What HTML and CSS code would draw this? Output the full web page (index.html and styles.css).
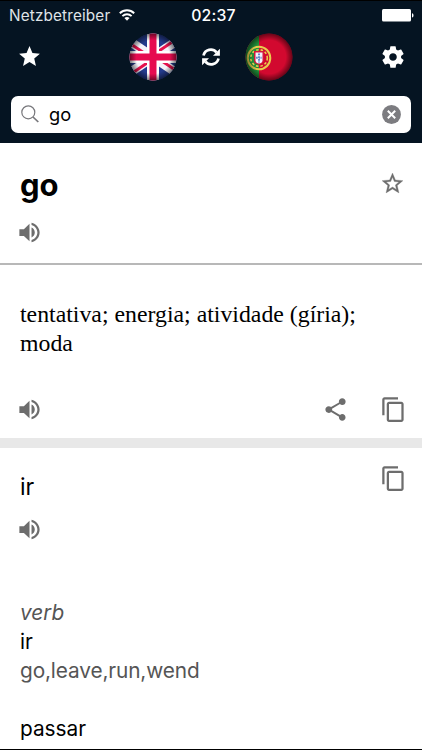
FILE: index.html
```html
<!DOCTYPE html>
<html lang="pt">
<head>
<meta charset="utf-8">
<title>Dictionary</title>
<link rel="stylesheet" href="styles.css">
</head>
<body>
<svg class="defs" aria-hidden="true">
  <symbol id="speaker" viewBox="0 0 24 24"><path d="M3 9v6h4l5 4.700V4.300L7 9H3zm13.700 3c0-1.770-1.020-3.600-2.900-4.400v8.800c1.880-.8 2.900-2.630 2.900-4.400zM13.800 3.230v2.060c2.890.86 5.200 3.540 5.200 6.710s-2.310 5.850-5.200 6.710v2.060c4.010-.91 7.200-4.490 7.200-8.770s-3.190-7.860-7.200-8.770z"/></symbol>
  <symbol id="copy" viewBox="0 0 24 24"><path d="M16 1H4c-1.1 0-2 .9-2 2v14h2V3h12V1zm3 4H8c-1.1 0-2 .9-2 2v14c0 1.1.9 2 2 2h11c1.1 0 2-.9 2-2V7c0-1.100-.9-2-2-2zm0 16H8V7h11v14z"/></symbol>
</svg>
<header class="header">
  <div class="status">
    <div class="carrier"><span class="carrier-name">Netzbetreiber</span>
      <svg class="wifi" viewBox="0 0 16 12"><g fill="none" stroke="#fff" stroke-width="1.9"><path d="M.8 4.200a10.300 10.300 0 0 1 14.400 0"/><path d="M3.400 7.100a6.600 6.600 0 0 1 9.200 0"/></g><path fill="#fff" d="M5.400 9.100a3.800 3.800 0 0 1 5.200 0L8 11.700z"/></svg>
    </div>
    <span class="time">02:37</span>
    <svg class="battery" viewBox="0 0 32 13"><rect width="29" height="12.500" rx="1.500"/><path d="M30 4.200c2 .3 2 4 0 4.300z"/></svg>
  </div>
  <nav class="nav">
    <svg class="star" viewBox="0 0 24 24"><path d="M12 17.270 18.180 21l-1.640-7.030L22 9.240l-7.190-.61L12 2 9.190 8.630 2 9.240l5.460 4.730L5.820 21z"/></svg>
    <div class="languages">
      <svg class="flag" viewBox="0 0 48 48">
        <defs><clipPath id="round"><circle cx="24" cy="24" r="23.500"/></clipPath>
        <radialGradient id="shade"><stop offset=".7" stop-color="#000" stop-opacity="0"/><stop offset="1" stop-color="#000" stop-opacity=".55"/></radialGradient></defs>
        <g clip-path="url(#round)"><path fill="#243b8c" d="M0 0h48v48H0z"/>
        <path stroke="#f4f2fa" stroke-width="9" d="M-4 5 52 43M52 5-4 43"/>
        <path stroke="#e5124d" stroke-width="3" d="M-4 7 24 26M24 22 52 3M52 41 24 22M24 26-4 45"/>
        <path fill="#fff" d="M18 0h12v48H18zM0 18h48v12H0z"/>
        <path fill="#e60b50" d="M20.500 0h7v48h-7zM0 20.500h48v7H0z"/>
        <path fill="url(#shade)" d="M0 0h48v48H0z"/></g>
      </svg>
      <svg class="swap" viewBox="0 0 18 18"><g fill="none" stroke="#fff" stroke-width="2.700"><path d="M1.500 7.500A7.400 7.400 0 0 1 14.500 4.400"/><path d="M16.500 10.500A7.400 7.400 0 0 1 3.500 13.600"/></g><path fill="#fff" d="M17.900.8v6.900H11zM.1 17.200v-6.900H7z"/></svg>
      <svg class="flag" viewBox="0 0 48 48">
        <g clip-path="url(#round)"><path fill="#d2092f" d="M0 0h48v48H0z"/><path fill="#21913a" d="M0 0h14v48H0z"/>
        <circle cx="14" cy="25" r="11.300" fill="none" stroke="#e7cd4d" stroke-width="2"/>
        <circle cx="14" cy="25" r="8.300" fill="none" stroke="#e7cd4d" stroke-width="1.600" stroke-dasharray="2.500 2"/>
        <path fill="#d5163b" d="M9 18h10v9c0 6-10 6-10 0z"/><path fill="#f2f3fb" d="M10.500 19.500h7v8c0 4-7 4-7 0z"/>
        <path stroke="#6688c6" stroke-width="2" stroke-dasharray="1.800 .9" d="M14 20.500v9M11 24.700h6"/>
        <path fill="url(#shade)" d="M0 0h48v48H0z"/></g>
      </svg>
    </div>
    <svg class="gear" viewBox="0 0 24 24"><path d="M19.430 12.980c.04-.32.07-.64.07-.98s-.03-.66-.07-.98l2.110-1.650c.19-.15.24-.42.12-.64l-2-3.460c-.12-.22-.39-.3-.61-.22l-2.490 1c-.52-.4-1.080-.73-1.690-.98l-.38-2.650C14.460 2.180 14.250 2 14 2h-4c-.25 0-.46.18-.49.42l-.38 2.650c-.61.25-1.170.59-1.690.98l-2.490-1c-.23-.09-.49 0-.61.22l-2 3.460c-.13.22-.07.49.12.64l2.110 1.650c-.04.32-.07.65-.07.98s.03.66.07.98l-2.110 1.650c-.19.15-.24.42-.12.64l2 3.460c.12.22.39.3.61.22l2.490-1c.52.4 1.080.73 1.690.98l.38 2.650c.03.24.24.42.49.42h4c.25 0 .46-.18.49-.42l.38-2.650c.61-.25 1.170-.59 1.690-.98l2.490 1c.23.09.49 0 .61-.22l2-3.460c.12-.22.07-.49-.12-.64l-2.110-1.650zM12 15.500c-1.930 0-3.500-1.570-3.500-3.500s1.570-3.500 3.500-3.500 3.500 1.570 3.500 3.500-1.570 3.500-3.500 3.500z"/></svg>
  </nav>
  <div class="search">
    <svg class="lens" viewBox="0 0 18 18" fill="none" stroke="#77777b"><circle cx="7.300" cy="7.300" r="6.500" stroke-width="1.200"/><path stroke-width="1.700" d="m12 12 5.300 5"/></svg>
    <span class="query">go</span>
    <svg class="clear" viewBox="0 0 19 19"><circle cx="9.500" cy="9.500" r="9.400" fill="#7c7c80"/><path stroke="#fff" stroke-width="2" d="m5.800 5.800 7.400 7.400m0-7.400-7.400 7.400"/></svg>
  </div>
</header>
<main>
  <section class="word">
    <div class="row"><h1 class="headword">go</h1><svg class="outline-star" viewBox="0 0 24 24"><path d="m22 9.240-7.190-.62L12 2 9.190 8.630 2 9.240l5.460 4.730L5.820 21 12 17.270 18.180 21l-1.630-7.030L22 9.240zM12 15.400l-3.760 2.270 1-4.280-3.320-2.880 4.380-.38L12 6.100l1.710 4.040 4.380.38-3.320 2.880 1 4.280L12 15.400z"/></svg></div>
    <svg class="icon"><use href="#speaker"/></svg>
  </section>
  <section class="translation">
    <p class="meaning">tentativa; energia; atividade (gíria); moda</p>
    <div class="actions"><svg class="icon"><use href="#speaker"/></svg>
      <svg class="icon share" viewBox="0 0 24 24"><path d="M18 16.080c-.76 0-1.440.3-1.960.77L8.910 12.700c.05-.23.09-.46.09-.7s-.04-.47-.09-.7l7.050-4.110c.54.5 1.250.81 2.040.81 1.660 0 3-1.340 3-3s-1.340-3-3-3-3 1.340-3 3c0 .24.04.47.09.7L8.040 9.810C7.500 9.310 6.790 9 6 9c-1.660 0-3 1.340-3 3s1.340 3 3 3c.79 0 1.500-.31 2.040-.81l7.120 4.160c-.05.21-.08.43-.08.65 0 1.610 1.310 2.920 2.920 2.920s2.920-1.310 2.920-2.920-1.310-2.920-2.920-2.920z"/></svg>
      <svg class="icon"><use href="#copy"/></svg></div>
  </section>
  <section class="details">
    <div class="row"><h2 class="term">ir</h2><svg class="icon"><use href="#copy"/></svg></div>
    <svg class="icon detail-speaker"><use href="#speaker"/></svg>
    <dl class="entries">
      <dt class="kind">verb</dt>
      <dt class="entry">ir</dt>
      <dd class="synonyms">go,leave,run,wend</dd>
      <dt class="entry next">passar</dt>
    </dl>
  </section>
</main>
</body>
</html>
```
FILE: styles.css
```css
* { box-sizing: border-box; }
body { margin: 0; width: 422px; height: 750px; overflow: hidden; border-bottom: 1px solid #000; background: #fff; color: #000; font-family: Inter, "Liberation Sans", sans-serif; }
main { height: 606px; overflow: hidden; }
h1, h2, p, dl, dd { margin: 0; font-weight: 400; }
svg { display: block; flex: none; }
.defs { display: none; }
.header { height: 143px; background: #051422; color: #fff; border-top: 1px solid #000; }
.status { height: 28px; padding: 0 8px 0 9px; display: grid; grid-template-columns: 1fr auto 1fr; align-items: center; }
.carrier { display: flex; align-items: center; gap: 9px; }
.carrier-name { font-size: 15.3px; letter-spacing: 0.15px; color: #dfe3e7; }
.wifi { width: 16px; height: 12px; }
.time { margin-left: 4px; font-size: 15.8px; font-weight: 500; letter-spacing: 0.2px; }
.battery { width: 32px; height: 13px; fill: #fff; justify-self: end; }
.nav { height: 55px; padding: 0 16px 0 17px; display: flex; justify-content: space-between; align-items: center; }
.star { width: 25px; height: 25px; fill: #fff; }
.languages { display: flex; align-items: center; gap: 25px; }
.flag { width: 48px; height: 48px; }
.swap { width: 18px; height: 18px; }
.gear { width: 26px; height: 26px; fill: #fff; }
.search { margin: 12px 11px 0; height: 37px; padding: 0 10px 1px; border-radius: 7px; display: flex; align-items: center; background: #fff; color: #000; }
.lens { width: 18px; height: 18px; }
.query { flex: 1; margin-left: 10px; font-size: 18.3px; }
.clear { width: 19px; height: 19px; }
.icon { width: 27px; height: 27px; fill: #6d6d6d; }
.row { display: flex; justify-content: space-between; }
.word { height: 122px; padding: 21px 15px 0 16px; border-bottom: 2px solid #b8b8b8; }
.headword { margin-left: 4px; font-size: 31px; line-height: 42px; font-weight: 700; }
.outline-star { width: 25px; height: 25px; margin: 7px 2px 0 0; fill: #6d6d6d; stroke: #6d6d6d; stroke-width: 0.3px; }
.word > .icon { margin-top: 13px; }
.translation { height: 183px; padding: 35px 15px 0 16px; border-bottom: 10px solid #e8e8e8; }
.meaning { margin-left: 4px; width: 360px; font-family: "Liberation Serif", serif; font-size: 23.8px; line-height: 29px; }
.actions { display: flex; margin-top: 38px; }
.share { margin-left: auto; margin-right: 31px; }
.details { padding: 17px 15px 0 16px; }
.term { margin: 7px 0 0 4px; font-size: 23px; line-height: 30px; }
.detail-speaker { margin-top: 14px; }
.entries { margin: 55px 0 0 4px; font-size: 20.8px; line-height: 29px; }
.kind { font-style: italic; color: #555; }
.synonyms { color: #555; letter-spacing: -0.12px; }
.next { margin-top: 29px; }
```
